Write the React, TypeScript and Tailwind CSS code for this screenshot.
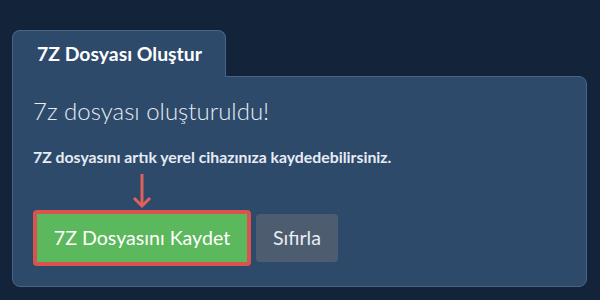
export default function App() {
  return (
    <div className="min-h-screen w-full bg-[#12233a] pt-[30px] pl-3 pr-[13px] pb-[13px] font-['Lato','Liberation_Sans',sans-serif]">
      <div className="relative z-10 -mb-px inline-flex h-[47px] w-[214px] items-center rounded-t-lg border border-b-0 border-[#4a6485] bg-[#2e4a6b] pl-6">
        <span className="text-[19.4px] font-bold text-white">7Z Dosyası Oluştur</span>
      </div>
      <div className="h-[211px] rounded-b-lg rounded-tr-lg border border-[#4a6485] bg-[#2e4a6b] px-5 pt-5">
        <h1 className="text-[24px] font-light leading-[1.2] text-[#e6ecf3]">7z dosyası oluşturuldu!</h1>
        <p className="mt-[22px] text-[15.8px] font-bold leading-[1.2] text-[#e6ecf3]">
          7Z dosyasını artık yerel cihazınıza kaydedebilirsiniz.
        </p>
        <div className="flex w-[218px] justify-center pt-[6px]">
          <svg width="20" height="36" viewBox="0 0 20 36" fill="none" stroke="#e0605a" strokeWidth="3">
            <line x1="10" y1="1" x2="10" y2="33" />
            <polyline points="2,25 10,33 18,25" strokeLinejoin="miter" />
          </svg>
        </div>
        <div className="mt-[1px] flex items-center">
          <div className="rounded border-4 border-[#d9534f]">
            <button className="h-12 w-[210px] bg-[#5cb85c] text-[19.6px] text-white">7Z Dosyasını Kaydet</button>
          </div>
          <button className="ml-[5px] h-12 w-[82px] rounded bg-[#4d5d6f] text-[19.6px] text-[#e6ecf3]">Sıfırla</button>
        </div>
      </div>
    </div>
  );
}
